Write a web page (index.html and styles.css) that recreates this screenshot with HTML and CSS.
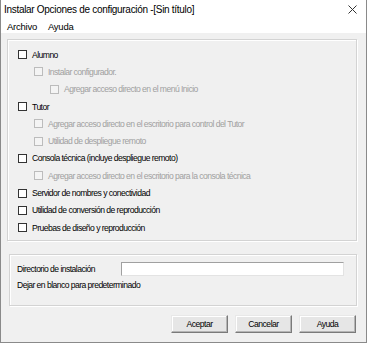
FILE: index.html
```html
<!DOCTYPE html>
<html lang="es">
<head>
  <meta charset="UTF-8">
  <title>Instalar Opciones de configuración</title>
  <link rel="stylesheet" href="styles.css">
</head>
<body>
  <div class="window">
    <div class="titlebar">
      <span class="title">Instalar Opciones de configuración -[Sin título]</span>
      <svg class="close" width="9" height="9" viewBox="0 0 9 9">
        <path d="M0.5 0.5 L8.5 8.5 M8.5 0.5 L0.5 8.5" stroke="#333" stroke-width="1"/>
      </svg>
    </div>
    <div class="menubar">
      <span class="menu">Archivo</span>
      <span class="menu">Ayuda</span>
    </div>

    <div class="content">
      <div class="group options">
        <label class="check lvl0"><span class="box"></span>Alumno</label>
        <label class="check lvl1 off"><span class="box"></span>Instalar configurador.</label>
        <label class="check lvl2 off"><span class="box"></span>Agregar acceso directo en el menú Inicio</label>
        <label class="check lvl0"><span class="box"></span>Tutor</label>
        <label class="check lvl1 off"><span class="box"></span>Agregar acceso directo en el escritorio para control del Tutor</label>
        <label class="check lvl1 off"><span class="box"></span>Utilidad de despliegue remoto</label>
        <label class="check lvl0"><span class="box"></span>Consola técnica (incluye despliegue remoto)</label>
        <label class="check lvl1 off"><span class="box"></span>Agregar acceso directo en el escritorio para la consola técnica</label>
        <label class="check lvl0"><span class="box"></span>Servidor de nombres y conectividad</label>
        <label class="check lvl0"><span class="box"></span>Utilidad de conversión de reproducción</label>
        <label class="check lvl0"><span class="box"></span>Pruebas de diseño y reproducción</label>
      </div>

      <div class="group dir">
        <div class="dir-row">
          <span class="dir-label">Directorio de instalación</span>
          <span class="field"></span>
        </div>
        <div class="hint">Dejar en blanco para predeterminado</div>
      </div>

      <div class="buttons">
        <button class="btn">Aceptar</button>
        <button class="btn">Cancelar</button>
        <button class="btn">Ayuda</button>
      </div>
    </div>
  </div>
</body>
</html>
```

FILE: styles.css
```css
body {
  margin: 0;
  font-family: "Liberation Sans", Arial, sans-serif;
  font-size: 8.6px;
  letter-spacing: -0.55px;
  color: #000;
  background: #fff;
}

.window {
  width: 367px;
  height: 343px;
  box-sizing: border-box;
  border: 1px solid #8a8a8a;
  border-top: none;
  background: #f0f0f0;
  display: flex;
  flex-direction: column;
}

.titlebar {
  height: 19px;
  background: #fff;
  display: flex;
  align-items: center;
  justify-content: space-between;
  padding: 0 9px 0 3px;
  font-size: 10px;
  letter-spacing: -0.3px;
}

.close {
  display: block;
  margin-top: -1px;
}

.menubar {
  height: 14px;
  background: #fff;
  display: flex;
  align-items: center;
  gap: 11px;
  padding-left: 6px;
  font-size: 9.5px;
  letter-spacing: -0.25px;
}

.content {
  padding: 6px 9px 0 6px;
}

.group {
  border: 1px solid #d3d3d3;
  box-shadow: inset 1px 1px 0 #fff, 1px 1px 0 #fff;
}

.options {
  padding: 6px 0 3px 10px;
  height: 191px;
}

.check {
  display: flex;
  align-items: center;
  height: 17.3px;
  gap: 5px;
}

.box {
  width: 9px;
  height: 9px;
  box-sizing: border-box;
  border: 1px solid #333;
  background: #fff;
}

.lvl1 { padding-left: 16px; }
.lvl2 { padding-left: 32px; }

.off {
  color: #a0a0a0;
}

.off .box {
  border-color: #bcbcbc;
  background: #f4f4f4;
}

.dir {
  margin: 13px 0 0 2px;
  height: 52px;
  padding: 7px 0 0 7px;
  box-sizing: border-box;
}

.dir-row {
  display: flex;
  align-items: center;
  height: 14px;
}

.dir-label {
  width: 104px;
}

.field {
  width: 223px;
  height: 14px;
  box-sizing: border-box;
  background: #fff;
  border: 1px solid #e3e3e3;
  border-top-color: #a0a0a0;
  border-left-color: #a0a0a0;
}

.hint {
  margin-top: 3px;
  height: 12px;
  line-height: 12px;
}

.buttons {
  display: flex;
  justify-content: flex-end;
  margin-top: 9px;
  padding-right: 1px;
}

.btn {
  width: 57px;
  height: 18px;
  margin-left: 6px;
  padding: 0;
  font-family: inherit;
  font-size: 8.6px;
  letter-spacing: -0.5px;
  color: #000;
  background: #e6e6e6;
  border: 1px solid #e8e8e8;
  border-right-color: #7a7a7a;
  border-bottom-color: #7a7a7a;
  box-shadow: inset -1px -1px 0 #b5b5b5, inset 1px 1px 0 #fff;
}

.btn + .btn {
  margin-left: 7px;
}
```
